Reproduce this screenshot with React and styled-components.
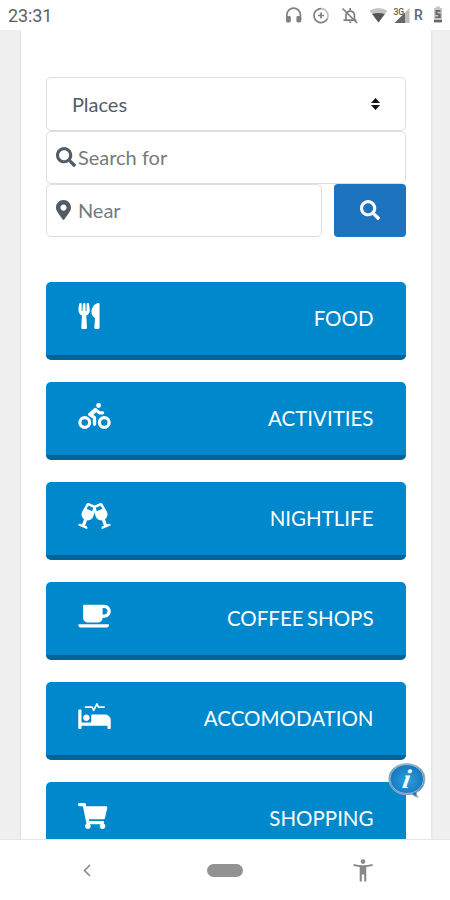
import React from "react";
import styled, { createGlobalStyle } from "styled-components";
import {
	FaSearch,
	FaMapMarkerAlt,
	FaUtensils,
	FaBiking,
	FaGlassCheers,
	FaCoffee,
	FaProcedures,
	FaShoppingCart,
} from "react-icons/fa";

const categories = [
	{ label: "FOOD", Icon: FaUtensils, iconWidth: 22 },
	{ label: "ACTIVITIES", Icon: FaBiking, iconWidth: 33 },
	{ label: "NIGHTLIFE", Icon: FaGlassCheers, iconWidth: 33 },
	{ label: "COFFEE SHOPS", Icon: FaCoffee, iconWidth: 33 },
	{ label: "ACCOMODATION", Icon: FaProcedures, iconWidth: 33 },
	{ label: "SHOPPING", Icon: FaShoppingCart, iconWidth: 29.5 },
];

function StatusBar() {
	return (
		<Status>
			<Time>23:31</Time>
			<StatusIcons viewBox="0 0 180 30">
				<g fill="none" stroke="#808080" strokeWidth="1.7">
					<path d="M16.8 20.5V15a6.8 6.8 0 0 1 13.6 0v5.5" />
					<path d="M51 8.6a7 7 0 1 0 6.5 9.6" />
					<path d="M51 8.6a7 7 0 0 1 6.5 9.6" stroke="#c4c4c4" />
					<path d="M51 12.5v6M48 15.5h6" />
					<path d="M76 20V14.5a4.3 4.3 0 0 1 8.4 0V20M73.5 20.2h13M80.2 8v2.5" />
					<path d="M72.5 8.5l14.5 14.5" />
				</g>
				<rect x="16" y="16" width="4.8" height="6.5" rx="1.4" fill="#808080" />
				<rect x="26.4" y="16" width="4.8" height="6.5" rx="1.4" fill="#808080" />
				<path d="M78.4 21.6h3.6l-1.8 1.9z" fill="#808080" />
				<path d="M99.5 10.7q9-5.2 18 0L108.5 22.5z" fill="#c4c4c4" />
				<path d="M102.2 14q6.3-2.2 12.6 0l-6.3 8.5z" fill="#555" />
				<path d="M139.5 8v15h-15z" fill="#bdbdbd" />
				<path d="M135 12.8V23H124.5z" fill="#666" />
				<SmallText x="123.5" y="15">3G</SmallText>
				<Roaming x="144" y="20.4">R</Roaming>
				<path d="M164 8h2V6.5h4V8h2v14.5h-8V8z" fill="#c6c6c6" />
				<path d="M165.5 10h5v1.7h-3v1.8h3.2v4.5h-5.3v-1.6h3v-1.3h-2.9zM164 20h8v2.2h-8z" fill="#666" />
			</StatusIcons>
		</Status>
	);
}

function SearchForm() {
	return (
		<Form>
			<Select>
				Places
				<Caret viewBox="0 0 9 12">
					<path d="M4.5 0L9 5H0zM4.5 12L0 7h9z" fill="#111" />
				</Caret>
			</Select>
			<Field>
				<FieldIcon $width={20}>
					<FaSearch />
				</FieldIcon>
				Search for
			</Field>
			<NearRow>
				<Field>
					<FieldIcon $width={15}>
						<FaMapMarkerAlt />
					</FieldIcon>
					Near
				</Field>
				<SearchButton>
					<FaSearch />
				</SearchButton>
			</NearRow>
		</Form>
	);
}

function InfoBubble() {
	return (
		<Bubble viewBox="0 0 40 38">
			<defs>
				<radialGradient id="bubble">
					<stop offset="0" stopColor="#2aa1dc" />
					<stop offset="1" stopColor="#1674bd" />
				</radialGradient>
			</defs>
			<path
				d="M19.8 1.8C9.8 1.8 2 8.5 2 17s7.8 15.5 17.8 15.5c1.8 0 3.5-.2 5.1-.6 1.5 1.5 3.4 2.5 5.6 3-.9-1.4-1.3-2.9-1.2-4.5 5.1-2.6 8.4-7.6 8.4-13.4C37.7 8.5 29.8 1.8 19.8 1.8z"
				fill="url(#bubble)"
				stroke="#98a5b0"
				strokeWidth="1.2"
			/>
			<ellipse cx="19.8" cy="17" rx="16.8" ry="14.4" fill="none" stroke="#b8d4e6" strokeWidth=".7" />
			<BubbleText transform="translate(14.5 25.5) skewX(-10)">i</BubbleText>
		</Bubble>
	);
}

function NavBar() {
	return (
		<Nav>
			<NavSlot>
				<svg width="8" height="13" viewBox="0 0 8 13">
					<path d="M7 1L1.5 6.5 7 12" fill="none" stroke="#888" strokeWidth="1.6" />
				</svg>
			</NavSlot>
			<NavSlot>
				<HomePill />
			</NavSlot>
			<NavSlot>
				<svg width="20" height="23" viewBox="0 0 20 23">
					<circle cx="10" cy="2.6" r="2.3" fill="#888" />
					<path d="M.6 5Q10 7.6 19.4 5l.4 1.8q-3.3.9-6.5 1.2V22.5h-2.1v-7H8.8v7H6.7V8Q3.5 7.7.2 6.8z" fill="#888" />
				</svg>
			</NavSlot>
		</Nav>
	);
}

function App() {
	return (
		<Screen>
			<GlobalStyle />
			<StatusBar />
			<Page>
				<Card>
					<SearchForm />
					<Categories>
						{categories.map(({ label, Icon, iconWidth }) => (
							<CategoryButton key={label} $iconWidth={iconWidth}>
								<Icon />
								<span>{label}</span>
							</CategoryButton>
						))}
					</Categories>
				</Card>
				<InfoBubble />
			</Page>
			<NavBar />
		</Screen>
	);
}

export default App;

const GlobalStyle = createGlobalStyle`
	* {
		box-sizing: border-box;
	}
	body {
		margin: 0;
		background: #fff;
	}
`

const Screen = styled.div`
	width: 450px;
	height: 900px;
	display: flex;
	flex-direction: column;
	overflow: hidden;
	font-family: Lato, "Liberation Sans", sans-serif;
`

const Status = styled.div`
	height: 30px;
	flex-shrink: 0;
	display: flex;
	justify-content: space-between;
	align-items: center;
	padding-left: 8px;
	background: #fff;
`

const Time = styled.span`
	font-family: Roboto, sans-serif;
	font-size: 18px;
	letter-spacing: -0.1px;
	line-height: 30px;
	padding-top: 1px;
	color: #606060;
`

const StatusIcons = styled.svg`
	width: 180px;
	height: 30px;
`

const SmallText = styled.text`
	font: 500 8.5px Roboto, sans-serif;
	fill: #555;
`

const Roaming = styled.text`
	font: 500 14px Roboto, sans-serif;
	fill: #666;
`

const Page = styled.main`
	position: relative;
	height: 809px;
	flex-shrink: 0;
	padding: 0 19px 0 21px;
	background: #f0f0f0;
	overflow: hidden;
`

const Card = styled.div`
	height: 100%;
	padding: 47px 25.5px 0 25.4px;
	background: #fff;
	box-shadow: 0 0 3px rgba(0, 0, 0, 0.12);
`

const Form = styled.div`
	display: flex;
	flex-direction: column;
`

const Field = styled.div`
	height: 53.5px;
	flex: 1 0 auto;
	display: flex;
	align-items: center;
	padding: 0 0 1px 8.5px;
	border: 1px solid #dcdfe2;
	border-radius: 5px;
	background: #fff;
	color: #747a80;
	font-size: 20px;
`

const Select = styled(Field)`
	justify-content: space-between;
	padding: 1px 25px 0 24.5px;
	color: #555c63;
`

const Caret = styled.svg`
	width: 9px;
	height: 12px;
`

const FieldIcon = styled.span`
	width: 22px;
	display: flex;
	color: #535c65;

	svg {
		width: ${(props) => props.$width}px;
	}
`

const NearRow = styled.div`
	display: flex;
	gap: 12px;

	${Field} {
		height: 53px;
	}
`

const SearchButton = styled.div`
	width: 71.5px;
	height: 52.5px;
	display: flex;
	justify-content: center;
	align-items: center;
	border-radius: 4px;
	background: #1e73be;
	color: #fff;
	font-size: 20px;
`

const Categories = styled.div`
	display: flex;
	flex-direction: column;
	gap: 22px;
	padding-top: 44.5px;
`

const CategoryButton = styled.div`
	height: 78px;
	flex-shrink: 0;
	display: flex;
	justify-content: space-between;
	align-items: center;
	padding: 0 32px 5px;
	border-bottom: 5px solid #00639a;
	border-radius: 5px;
	background: #0088cc;
	color: #fff;
	font-size: 20.5px;
	word-spacing: -2px;

	svg {
		width: ${(props) => props.$iconWidth}px;
		height: 26px;
	}
	span {
		padding-top: 4px;
	}
`

const Bubble = styled.svg`
	position: absolute;
	left: 386.5px;
	top: 732px;
	width: 40px;
	height: 38px;
`

const BubbleText = styled.text`
	font: italic bold 27px "Liberation Serif", serif;
	fill: #fff;
`

const Nav = styled.nav`
	height: 61px;
	flex-shrink: 0;
	display: grid;
	grid-template-columns: 138px 138px 138px;
	justify-content: center;
	border-top: 1px solid #e6e6e6;
	background: #fff;
`

const NavSlot = styled.div`
	display: flex;
	justify-content: center;
	align-items: center;
`

const HomePill = styled.div`
	width: 36px;
	height: 13px;
	border-radius: 7px;
	background: #929292;
`
